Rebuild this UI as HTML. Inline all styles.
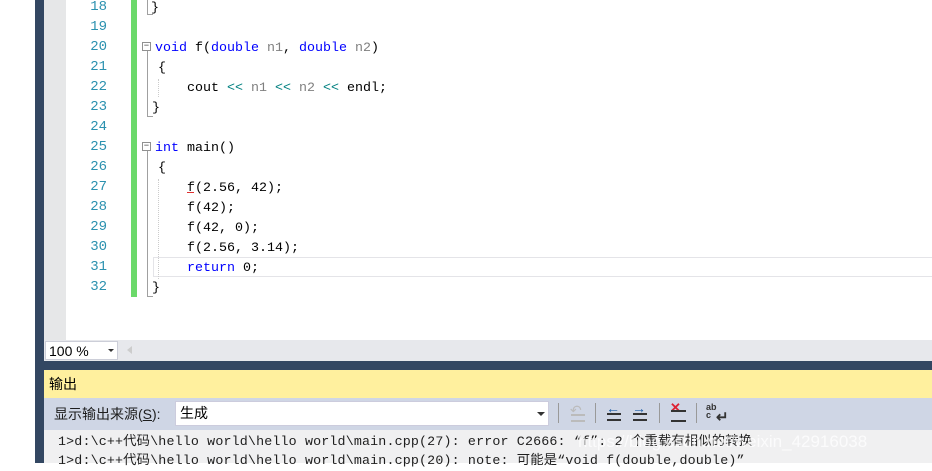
<!DOCTYPE html><html><head><meta charset="utf-8"><style>
body{margin:0;width:932px;height:463px;overflow:hidden;position:relative;background:#fff;font-family:"Liberation Mono","Noto Sans CJK SC",monospace}
div{position:absolute}
.ln{left:66px;width:41px;text-align:right;color:#2b91af;font-size:14px;height:20px;line-height:20px}
.cd{left:155px;font-size:13.33px;height:20px;line-height:20px;white-space:pre;color:#000}
.k{color:#0000ff}.g{color:#808080}.t{color:#008080}
.ui{font-family:"Liberation Sans","Noto Sans CJK SC",sans-serif}
</style></head><body>
<div style="left:35px;top:0;width:9px;height:463px;background:#334762"></div>
<div style="left:44px;top:0;width:22px;height:340px;background:#e6e7e8"></div>
<div style="left:131px;top:0;width:6px;height:297px;background:#6bd96a"></div>
<div style="left:153px;top:257px;width:779px;height:20px;border:1px solid #e4e4e8;border-right:none;box-sizing:border-box"></div>
<div style="left:147px;top:0;width:5px;height:14px;border-left:1px solid #a0a0a0;border-bottom:1px solid #a0a0a0"></div>
<div style="left:142px;top:42px;width:9px;height:9px;border:1px solid #909090;box-sizing:border-box;font-size:9px;line-height:6px;text-align:center;color:#333">−</div>
<div style="left:147px;top:51px;width:5px;height:65px;border-left:1px solid #a0a0a0;border-bottom:1px solid #a0a0a0"></div>
<div style="left:142px;top:142px;width:9px;height:9px;border:1px solid #909090;box-sizing:border-box;font-size:9px;line-height:6px;text-align:center;color:#333">−</div>
<div style="left:147px;top:151px;width:5px;height:145px;border-left:1px solid #a0a0a0;border-bottom:1px solid #a0a0a0"></div>
<div style="left:158px;top:79px;height:18px;border-left:1px dotted #ccc"></div>
<div style="left:158px;top:179px;height:100px;border-left:1px dotted #ccc"></div>
<div class="ln" style="top:-3px">18</div><div class="cd" style="top:-1px;left:151px">}</div>
<div class="ln" style="top:17px">19</div>
<div class="ln" style="top:37px">20</div><div class="cd" style="top:39px"><span class="k">void</span> f(<span class="k">double</span> <span class="g">n1</span>, <span class="k">double</span> <span class="g">n2</span>)</div>
<div class="ln" style="top:57px">21</div><div class="cd" style="top:59px;left:158px">{</div>
<div class="ln" style="top:77px">22</div><div class="cd" style="top:79px">    cout <span class="t">&lt;&lt;</span> <span class="g">n1</span> <span class="t">&lt;&lt;</span> <span class="g">n2</span> <span class="t">&lt;&lt;</span> endl;</div>
<div class="ln" style="top:97px">23</div><div class="cd" style="top:99px;left:152px">}</div>
<div class="ln" style="top:117px">24</div>
<div class="ln" style="top:137px">25</div><div class="cd" style="top:139px"><span class="k">int</span> main()</div>
<div class="ln" style="top:157px">26</div><div class="cd" style="top:159px;left:158px">{</div>
<div class="ln" style="top:177px">27</div><div class="cd" style="top:179px">    f(2.56, 42);</div>
<div style="left:187px;top:191px;width:7px;height:1px;border-bottom:1px solid #e03030"></div>
<div class="ln" style="top:197px">28</div><div class="cd" style="top:199px">    f(42);</div>
<div class="ln" style="top:217px">29</div><div class="cd" style="top:219px">    f(42, 0);</div>
<div class="ln" style="top:237px">30</div><div class="cd" style="top:239px">    f(2.56, 3.14);</div>
<div class="ln" style="top:257px">31</div><div class="cd" style="top:259px">    <span class="k">return</span> 0;</div>
<div class="ln" style="top:277px">32</div><div class="cd" style="top:279px;left:152px">}</div>
<div style="left:44px;top:340px;width:888px;height:21px;background:#e7e8ec"></div>
<div class="ui" style="left:45px;top:341px;width:73px;height:19px;background:#fff;border:1px solid #ccced8;box-sizing:border-box;font-size:14px;line-height:18px;padding-left:3px">100 %</div>
<div style="left:108px;top:349px;border:3px solid transparent;border-top:3px solid #333"></div>
<div style="left:127px;top:346px;border:4px solid transparent;border-right:5px solid #ccc;border-left:none"></div>
<div style="left:44px;top:361px;width:888px;height:9px;background:#334762"></div>
<div class="ui" style="left:44px;top:370px;width:888px;height:28px;background:#fff09e;font-size:14px;line-height:28px;padding-left:5px;box-sizing:border-box">输出</div>
<div style="left:44px;top:398px;width:888px;height:32px;background:#cfd6e5"></div>
<div class="ui" style="left:54px;top:404px;font-size:14px;line-height:20px;color:#1e1e1e">显示输出来源(<u>S</u>):</div>
<div class="ui" style="left:175px;top:401px;width:374px;height:25px;background:#fff;border:1px solid #ccd;box-sizing:border-box;font-size:14px;line-height:23px;padding-left:4px">生成</div>
<div style="left:537px;top:412px;border:4px solid transparent;border-top:4px solid #333"></div>
<div style="left:558px;top:403px;width:1px;height:20px;background:#999"></div>
<div style="left:595px;top:403px;width:1px;height:20px;background:#999"></div>
<div style="left:659px;top:403px;width:1px;height:20px;background:#999"></div>
<div style="left:696px;top:403px;width:1px;height:20px;background:#999"></div>
<div style="left:570px;top:402px;color:#bbb;font-size:14px" class="ui">↶</div>
<div style="left:571px;top:414px;width:14px;height:4px;border-top:2px solid #bbb;border-bottom:2px solid #bbb"></div>
<div style="left:606px;top:400px;color:#1e5fa8;font-size:14px;font-weight:bold" class="ui">←</div>
<div style="left:607px;top:413px;width:14px;height:4px;border-top:2px solid #333;border-bottom:2px solid #333"></div>
<div style="left:632px;top:400px;color:#1e5fa8;font-size:14px;font-weight:bold" class="ui">→</div>
<div style="left:633px;top:413px;width:14px;height:4px;border-top:2px solid #333;border-bottom:2px solid #333"></div>
<div style="left:670px;top:400px;color:#d23;font-size:13px;font-weight:bold" class="ui">✕</div>
<div style="left:671px;top:410px;width:15px;height:8px;border-top:2px solid #333;border-bottom:2px solid #333"></div>
<div style="left:706px;top:403px;font-size:9px;line-height:8px;font-weight:bold;color:#333" class="ui">ab<br>c</div>
<div style="left:716px;top:408px;color:#333;font-size:15px;font-weight:bold" class="ui">↵</div>
<div style="left:44px;top:430px;width:888px;height:33px;background:#f0f0f1"></div>
<div style="left:58px;top:433px;font-size:13.33px;line-height:19px;white-space:pre;color:#1e1e1e;letter-spacing:0.15px">1&gt;d:\c++代码\hello world\hello world\main.cpp(27): error C2666: “f”: 2 个重载有相似的转换
1&gt;d:\c++代码\hello world\hello world\main.cpp(20): note: 可能是“void f(double,double)”</div>
<div class="ui" style="left:578px;top:432px;font-size:17px;color:rgba(255,255,255,.75);white-space:nowrap">https://blog.csdn.net/weixin_42916038</div>
</body></html>
